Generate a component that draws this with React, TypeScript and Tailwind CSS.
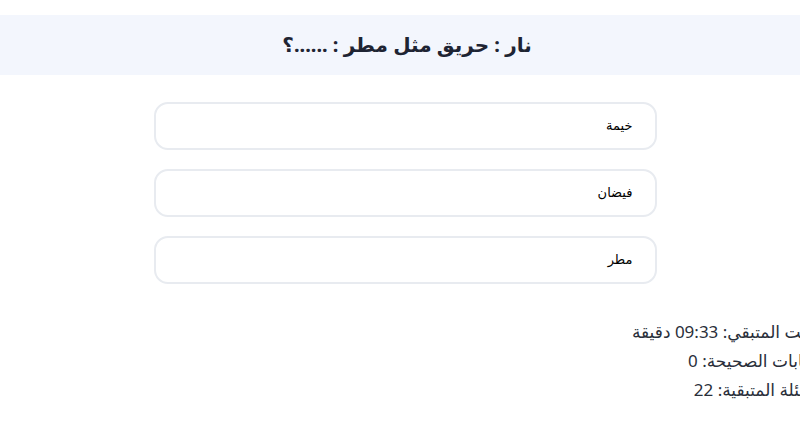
import React from 'react'

const options = ['خيمة', 'فيضان', 'مطر']

const stats = [
  'الوقت المتبقي: 09:33 دقيقة',
  'الإجابات الصحيحة: 0',
  'الأسئلة المتبقية: 22',
]

export default function App() {
  return (
    <div
      dir="rtl"
      className="h-[445px] w-full overflow-hidden bg-white text-[#1f2937]"
      style={{ fontFamily: '"Noto Sans", "DejaVu Sans", sans-serif' }}
    >
      <div className="mt-[15px] flex h-[60px] items-center justify-center bg-[#f3f6fd] pl-[14px]">
        <h1 className="text-[20px] font-bold text-[#1e2433]">نار : حريق مثل مطر : ......؟</h1>
      </div>

      <div className="mt-[27px] flex justify-center pl-[10px]">
        <div className="flex w-[503px] flex-col gap-[19px]">
          {options.map((o) => (
            <button
              key={o}
              className="flex h-[48px] items-center rounded-[14px] border-2 border-[#e8ebf0] bg-white px-[22px] text-[13px] text-black"
              style={{ fontFamily: '"Liberation Sans", "DejaVu Sans", sans-serif' }}
            >
              {o}
            </button>
          ))}
        </div>
      </div>

      <div className="-mr-[28px] mt-[33px] flex flex-col text-[17px] leading-[29px] text-[#2a2f3a]">
        {stats.map((s) => (
          <p key={s}>{s}</p>
        ))}
      </div>
    </div>
  )
}
